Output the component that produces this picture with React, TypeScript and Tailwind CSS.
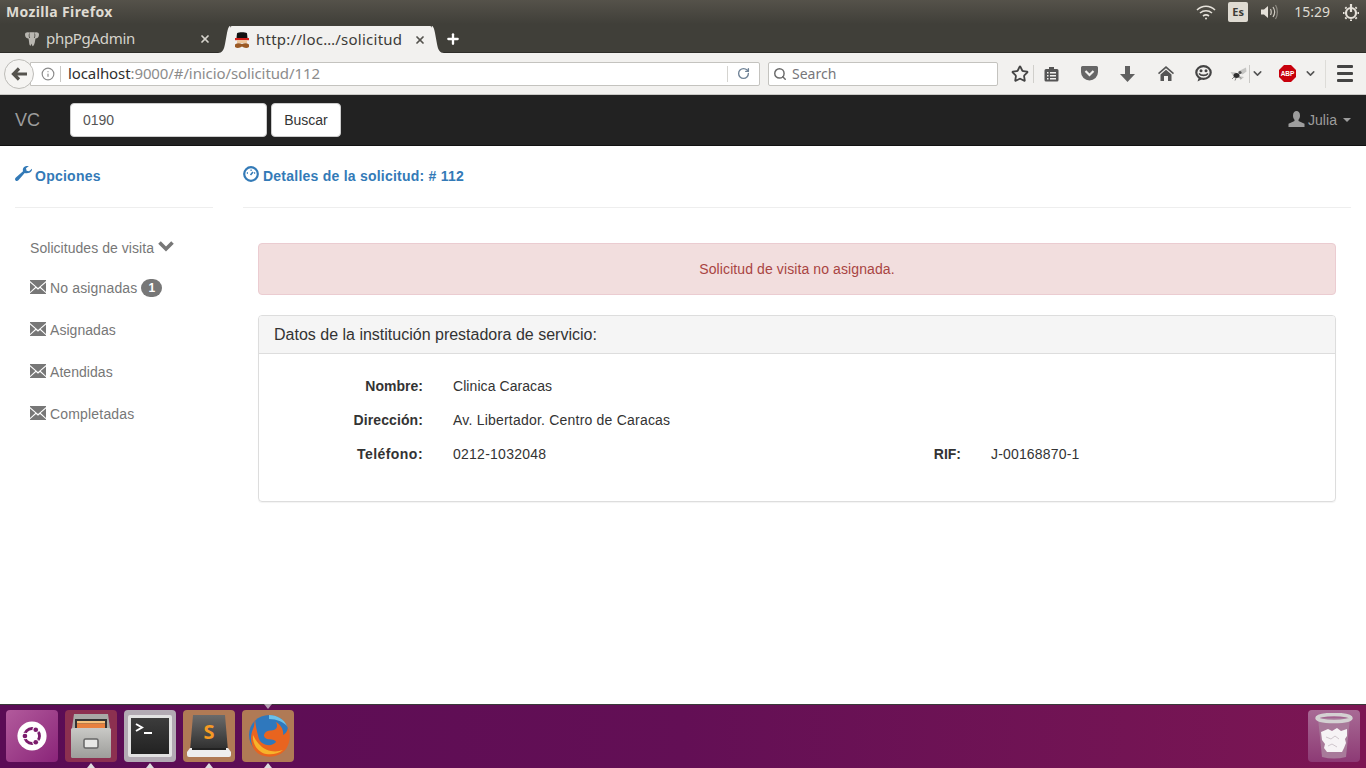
import { Info, RotateCw, Search, Star, ChevronDown, X, Plus } from 'lucide-react'

const page = { fontFamily: '"Liberation Sans", Arial, sans-serif' }
const ui = { fontFamily: '"Noto Sans", "Open Sans", sans-serif' }

function Envelope() {
  return (
    <svg width="16" height="14" viewBox="0 0 16 14" className="shrink-0">
      <path fill="#777" d="M0 0h16v1L8 8 0 1zM0 2.500 5.300 7 0 12zM16 2.500 10.700 7 16 12zM0 14v-.8L6 8l2 1.800L10 8l6 5.200v.8z" />
    </svg>
  )
}

function SideItem({ label, badge, w }: { label: string; badge?: string; w: string }) {
  return (
    <div className="flex h-[42px] items-center gap-1 text-[#777]">
      <span className="-mt-[3px]"><Envelope /></span>
      <span className={w}>{label}</span>
      {badge && (
        <span className="flex h-[18px] w-[21px] items-center justify-center rounded-full bg-[#777] text-xs font-bold text-white">
          {badge}
        </span>
      )}
    </div>
  )
}

function Tile({ bg, children }: { bg: string; children: React.ReactNode }) {
  return <div className={`flex h-[52px] w-[52px] items-center justify-center rounded-[4px] ${bg}`}>{children}</div>
}

function Pip() {
  return <span className="absolute -bottom-[6px] left-1/2 h-0 w-0 -translate-x-1/2 border-x-[4px] border-b-[5px] border-x-transparent border-b-[#ddd]" />
}

export default function App() {
  return (
    <div className="flex h-[768px] w-[1366px] flex-col overflow-hidden bg-white text-sm text-[#333]" style={page}>
      {/* barra ubuntu */}
      <div className="flex h-6 shrink-0 items-center justify-between bg-gradient-to-b from-[#55524a] to-[#403f39] pl-[6px] pr-[7px] text-[#dfdbd2]" style={ui}>
        <span className="text-[14px] font-bold tracking-[0.35px]">Mozilla Firefox</span>
        <div className="flex items-center">
          <svg width="20" height="16" viewBox="0 0 20 16" fill="none" stroke="#e6e2da" strokeWidth="1.600" className="mr-[12px]">
            <path d="M1 6c5-5 13-5 18 0M4 9c3.500-3 8.500-3 12 0M7 12c2-1.500 4-1.500 6 0" />
            <circle cx="10" cy="14.500" r="1" fill="#e6e2da" stroke="none" />
          </svg>
          <span className="mr-[12px] flex h-5 w-5 items-center justify-center rounded-[2px] bg-[#dfdbd2] text-[11px] font-bold text-[#3c3b37]">Es</span>
          <svg width="20" height="16" viewBox="0 0 20 16" fill="none" className="mr-[14px]">
            <path fill="#e6e2da" d="M1 5.500h3L8 2v12l-4-3.500H1z" />
            <path stroke="#cfcbc2" strokeWidth="1.200" d="M10.500 5c1 2 1 4 0 6M13 3c2 3 2 7 0 10" />
            <path stroke="#8d8a82" strokeWidth="1.200" d="M15.500 1c2.500 4 2.500 10 0 14" />
          </svg>
          <span className="mr-[13px] text-[14px]">15:29</span>
          <svg width="16" height="17" viewBox="0 0 16 17" fill="none" stroke="#e6e2da">
            <circle cx="8" cy="9" r="5" strokeWidth="2.200" />
            <path d="M8 0v8" strokeWidth="2.200" />
            <path d="M14.500 9H16M0 9h1.500M12.500 4.500l1.200-1.200M3.500 4.500 2.300 3.300M12.500 13.500l1.200 1.200M3.500 13.500l-1.200 1.200M8 15.500V17" strokeWidth="2" />
          </svg>
        </div>
      </div>

      {/* pestañas */}
      <div className="flex h-[29px] shrink-0 items-end border-b border-[#2e2d29] bg-[#403f39] text-[15px]" style={ui}>
        <div className="flex h-[27px] w-[218px] items-center pl-[24px] pr-[7px] pt-[1px] text-[#d6d3cc]">
          <svg width="16" height="16" viewBox="0 0 16 16" className="mr-[6px] shrink-0">
            <path fill="#b9b7b1" d="M1 3.500C1 1.500 3 1 5 1.500 6 1 10 1 11 1.500 13 1 15 1.500 15 3.500c0 2.500-1.500 4-3.500 4-.5 2.500-.7 6-2.300 7.500-.8.500-1.200-.5-1.200-1.500 0-1-.5-1-.7 0-.2 1-.8 1.500-1.500.8C5 13.500 5.200 10 4.500 7.500 2.500 7.500 1 6 1 3.500z" />
            <path stroke="#403f39" strokeWidth="0.800" fill="none" d="M5.500 2.500c-.5 1.500-.5 3 .2 4.500M10.500 2.500c.5 1.500.5 3-.2 4.500" />
          </svg>
          <span className="flex-1 tracking-[-0.3px]">phpPgAdmin</span>
          <X size={12} strokeWidth={3.500} className="text-[#d6d3cc]" />
        </div>
        <svg width="12" height="27" viewBox="0 0 12 27" className="-mb-px shrink-0">
          <path fill="#f2f1ef" d="M0 27c4 0 6-3 7-9L9 7c1-5 2-7 3-7v27z" />
        </svg>
        <div className="-mb-px flex h-[27px] w-[202px] items-center rounded-t-[2px] bg-[#f2f1ef] pl-[4px] pr-[6px] pt-[1px] text-[#3c3b37]">
          <svg width="16" height="17" viewBox="0 0 16 17" className="mr-[6px] shrink-0">
            <path fill="#111" d="M2.500 6 3 1.200C5 0 11 0 13 1.200L13.500 6z" />
            <rect x="1" y="6" width="14" height="2.200" fill="#d3201a" />
            <rect x="3" y="8.200" width="10" height="2.800" fill="#efc79c" />
            <path fill="#9c5a24" d="M1 12.500c2-1.500 5-1.500 7-.5 2-1 5-1 7 .5V15c-2 1.500-5 1-7-.5-2 1.500-5 2-7 .5z" />
          </svg>
          <span className="flex-1 whitespace-nowrap tracking-[0.25px]">http://loc…/solicitud</span>
          <X size={12} strokeWidth={3.500} className="text-[#55534e]" />
        </div>
        <svg width="12" height="27" viewBox="0 0 12 27" className="-mb-px shrink-0">
          <path fill="#f2f1ef" d="M12 27c-4 0-6-3-7-9L3 7C2 2 1 0 0 0v27z" />
        </svg>
        <div className="flex h-[27px] w-[18px] items-center justify-center">
          <Plus size={16} strokeWidth={3.500} className="text-white" />
        </div>
      </div>

      {/* barra de navegacion */}
      <div className="flex h-[42px] shrink-0 items-center border-b border-[#c9c8c5] bg-[#f2f1ef] pl-[4px] pr-[13px]" style={ui}>
        <div className="z-10 flex h-[30px] w-[30px] shrink-0 items-center justify-center rounded-full border border-[#bdbcb8] bg-[#f5f4f2]">
          <svg width="16" height="14" viewBox="0 0 16 14" fill="none" stroke="#55534e" strokeWidth="3.200">
            <path d="M8 1.500 2.500 7 8 12.500M3 7h13" />
          </svg>
        </div>
        <div className="-ml-[4px] flex h-[24px] w-[730px] shrink-0 items-center rounded-r-[2px] border border-[#c4c3bf] bg-white pl-[10px] pr-[9px] text-[15px]">
          <Info size={14} className="mr-[5px] text-[#8a8a8a]" />
          <span className="mr-[7px] h-[16px] border-l border-[#c9c8c5]" />
          <span className="tracking-[-0.1px] text-[#2f2f2f]">localhost</span>
          <span className="tracking-[-0.1px] text-[#8c8c8c]">:9000/#/inicio/solicitud/112</span>
          <span className="ml-auto mr-[2px] h-[16px] border-l border-[#d5d4d0]" />
          <RotateCw size={13} strokeWidth={2.500} className="ml-[7px] text-[#6f8296]" />
        </div>
        <div className="ml-[8px] flex h-[24px] w-[230px] shrink-0 items-center rounded-[2px] border border-[#c4c3bf] bg-white pl-[2px] text-[14px] text-[#77767a]">
          <Search size={14} strokeWidth={2.500} className="mr-[5px] ml-[2px] text-[#6a6a6a]" />
          Search
        </div>
        <Star size={18} strokeWidth={2.400} className="ml-[13px] shrink-0 text-[#444]" />
        <span className="ml-[4px] h-[18px] border-l border-[#d0cfcb]" />
        <svg width="15" height="16" viewBox="0 0 15 16" className="ml-[10px] shrink-0">
          <path fill="#555" fillRule="evenodd" d="M2 3h3V1h5v2h3q1.500 0 1.500 1.500V14q0 1.500-1.500 1.500H2Q.5 15.500.5 14V4.500Q.5 3 2 3zM3 6v1.500h1.500V6zm3 0v1.500h6V6zM3 9v1.500h1.500V9zm3 0v1.500h6V9zm-3 3v1.500h1.500V12zm3 0v1.500h6V12z" />
        </svg>
        <svg width="17" height="15" viewBox="0 0 17 15" className="ml-[22px] shrink-0">
          <path fill="#666" d="M1.500 0h14A1.500 1.500 0 0 1 17 1.500V6a8.500 8.500 0 0 1-17 0V1.500A1.500 1.500 0 0 1 1.500 0z" />
          <path fill="none" stroke="#f2f1ef" strokeWidth="2.200" d="m4.500 5 4 4 4-4" />
        </svg>
        <svg width="15" height="16" viewBox="0 0 15 16" className="ml-[22px] shrink-0">
          <path fill="#606060" d="M5 0h5v8h5l-7.500 8L0 8h5z" />
        </svg>
        <svg width="16" height="15" viewBox="0 0 16 15" className="ml-[23px] shrink-0">
          <path fill="#555" d="M8 0 16 7l-1 1.200L8 2.200 1 8.200 0 7z" />
          <path fill="#555" d="M8 3.800 13.500 8.500V15H10V10H6v5H2.500V8.500z" />
        </svg>
        <svg width="17" height="17" viewBox="0 0 17 17" className="ml-[21px] shrink-0">
          <ellipse cx="8.500" cy="7.500" rx="7.200" ry="6.300" fill="#f2f1ef" stroke="#444" strokeWidth="2.200" />
          <circle cx="6" cy="5.800" r="1.500" fill="#444" />
          <circle cx="11" cy="5.800" r="1.500" fill="#444" />
          <path d="M4 8.500c2 2.500 7 2.500 9 0" fill="none" stroke="#444" strokeWidth="1.600" />
          <path d="M2.500 16.500 4 12l3.500 2z" fill="#444" />
        </svg>
        <svg width="17" height="14" viewBox="0 0 17 14" className="ml-[18px] shrink-0">
          <path fill="#c4c4c2" d="M8 4.500 16 .5l.5 4-4 3zM.5 5l6 .5-3 4zM8 9l6 1-3.500 3z" />
          <ellipse cx="6.500" cy="8.500" rx="3" ry="2.500" fill="#2e2e2e" />
          <circle cx="10" cy="5.500" r="1.600" fill="#555" />
          <path stroke="#555" strokeWidth="0.700" d="M4 10 2 12M6 11l-1 2.500M9 9.500l2 2" />
        </svg>
        <span className="ml-[2px] h-[18px] border-l border-[#c9c8c5]" />
        <ChevronDown size={13} strokeWidth={2.800} className="ml-[1px] shrink-0 text-[#555]" />
        <svg width="17" height="17" viewBox="0 0 17 17" className="ml-[15px] shrink-0">
          <path fill="#c8000c" d="M5 0h7l5 5v7l-5 5H5l-5-5V5z" />
          <text x="8.500" y="11" textAnchor="middle" fontSize="6.500" fontWeight="700" fill="#fff" style={page}>ABP</text>
        </svg>
        <ChevronDown size={13} strokeWidth={2.800} className="ml-[8px] shrink-0 text-[#555]" />
        <span className="ml-[8px] h-[28px] border-l border-[#dddcd8]" />
        <div className="ml-auto flex w-[16px] shrink-0 flex-col gap-[4px]">
          <span className="h-[3px] rounded-[1px] bg-[#444]" />
          <span className="h-[3px] rounded-[1px] bg-[#444]" />
          <span className="h-[3px] rounded-[1px] bg-[#444]" />
        </div>
      </div>

      {/* navbar de la app */}
      <div className="flex h-[51px] shrink-0 items-center border-b border-[#111] bg-[#222] pl-[15px] pr-[15px]">
        <span className="w-[55px] text-lg text-[#9d9d9d]">VC</span>
        <div className="flex h-[34px] w-[197px] items-center rounded-[4px] border border-[#ccc] bg-white pl-[12px] text-[#555]">0190</div>
        <button className="ml-1 h-[34px] w-[70px] rounded-[4px] border border-[#ccc] bg-white text-[#333]">Buscar</button>
        <div className="ml-auto flex items-center text-[#9d9d9d]">
          <svg width="17" height="16" viewBox="0 0 17 16" className="mr-[3px] -mt-[2px]">
            <path fill="#9d9d9d" d="M5 4.500C5 1.500 6.500 0 8.500 0S12 1.500 12 4.500c0 2-.7 3.500-1.500 4.300V10l6 2.800V16H.5v-3.200l6-2.800V8.800C5.700 8 5 6.500 5 4.500z" />
          </svg>
          <span className="tracking-[0.05px]">Julia</span>
          <span className="ml-[6px] h-0 w-0 border-x-[4px] border-t-[4px] border-x-transparent border-t-[#9d9d9d]" />
        </div>
      </div>

      {/* contenido */}
      <div className="flex min-h-0 flex-1 pl-[15px] pr-[15px]">
        <aside className="w-[198px] shrink-0">
          <div className="flex h-[62px] items-center gap-[3px] border-b border-[#eee] pb-[2px] font-bold tracking-[0.25px] text-[#337ab7]">
            <svg width="17" height="15" viewBox="0 0 17 15" className="-mt-1">
              <path fill="#337ab7" d="M17 2.800 14 5.300l-2.400-.6L11 2.300 13.900 0C11 -.6 7.800.9 7.800 3.800c0 .6.100 1 .2 1.500L.9 11.500c-1.100 1-1.100 2.100-.3 2.900.8.800 1.900.800 2.800-.2L9.700 7c3.400.8 7.900-.9 7.300-4.200z" />
            </svg>
            Opciones
          </div>
          <div className="pl-[15px] pt-[20px]">
            <div className="flex h-[40px] items-center gap-1 text-[#777]">
              <span className="tracking-[0.05px]">Solicitudes de visita</span>
              <svg width="16" height="12" viewBox="0 0 16 12" className="-mt-1">
                <path fill="none" stroke="#777" strokeWidth="3.600" d="m1.500 2.500 6.500 6.500 6.500-6.500" />
              </svg>
            </div>
            <div className="-mt-px">
              <SideItem label="No asignadas" badge="1" w="tracking-[0.15px]" />
              <SideItem label="Asignadas" w="tracking-[0.05px]" />
              <SideItem label="Atendidas" w="tracking-[0.05px]" />
              <SideItem label="Completadas" w="tracking-[0.18px]" />
            </div>
          </div>
        </aside>

        <main className="ml-[30px] min-w-0 flex-1">
          <div className="flex h-[62px] items-center gap-[4px] border-b border-[#eee] pb-[2px] font-bold tracking-[0.235px] text-[#337ab7]">
            <svg width="16" height="16" viewBox="0 0 16 16" fill="none" className="-mt-1">
              <circle cx="8" cy="8" r="6.800" stroke="#337ab7" strokeWidth="2.200" />
              <path stroke="#337ab7" strokeWidth="1.600" d="M3.800 7h1.200M7.500 4.300h1.200M11 7h1.200M7.500 9 10 6" />
            </svg>
            Detalles de la solicitud: # 112
          </div>
          <div className="pl-[15px] pr-[15px] pt-[35px]">
            <div className="flex h-[52px] items-center justify-center rounded-[4px] border border-[#ebccd1] bg-[#f2dede] tracking-[0.1px] text-[#a94442]">
              Solicitud de visita no asignada.
            </div>
            <div className="mt-[20px] rounded-[4px] border border-[#ddd] shadow-[0_1px_1px_rgba(0,0,0,0.05)]">
              <div className="flex h-[38px] items-center rounded-t-[3px] border-b border-[#ddd] bg-[#f5f5f5] pl-[15px] text-base text-[#333]">
                Datos de la institución prestadora de servicio:
              </div>
              <div className="h-[147px] pt-[15px]">
                <div className="flex h-[34px] items-center">
                  <span className="w-[164px] text-right font-bold tracking-[0.02px]">Nombre:</span>
                  <span className="ml-[30px] tracking-[0.07px]">Clinica Caracas</span>
                </div>
                <div className="flex h-[34px] items-center">
                  <span className="w-[164px] text-right font-bold tracking-[0.1px]">Dirección:</span>
                  <span className="ml-[30px] tracking-[0.21px]">Av. Libertador. Centro de Caracas</span>
                </div>
                <div className="flex h-[34px] items-center">
                  <span className="w-[164px] text-right font-bold tracking-[0.45px]">Teléfono:</span>
                  <span className="ml-[30px] w-[380px] tracking-[0.25px]">0212-1032048</span>
                  <span className="w-[128px] text-right font-bold">RIF:</span>
                  <span className="ml-[30px] tracking-[0.17px]">J-00168870-1</span>
                </div>
              </div>
            </div>
          </div>
        </main>
      </div>

      {/* launcher */}
      <div className="relative flex h-[64px] shrink-0 items-center justify-between bg-gradient-to-r from-[#5a0c55] via-[#630f55] to-[#7c1653] pl-[6px] pr-[6px] shadow-[inset_0_1px_0_#3a3a3a]">
        <div className="flex items-center gap-[7px]">
          <Tile bg="bg-gradient-to-br from-[#b25a9c] to-[#8a2379]">
            <svg width="30" height="30" viewBox="0 0 36 36">
              <circle cx="18" cy="18" r="17.500" fill="#fff" />
              <circle cx="18" cy="18" r="9" fill="none" stroke="#7b1c6c" strokeWidth="3.400" />
              <circle cx="9.500" cy="18" r="4" fill="#fff" />
              <circle cx="9.500" cy="18" r="2.800" fill="#7b1c6c" />
              <circle cx="22.500" cy="10.500" r="4" fill="#fff" />
              <circle cx="22.500" cy="10.500" r="2.800" fill="#7b1c6c" />
              <circle cx="22.500" cy="25.500" r="4" fill="#fff" />
              <circle cx="22.500" cy="25.500" r="2.800" fill="#7b1c6c" />
            </svg>
          </Tile>
          <div className="relative">
            <Tile bg="bg-[#8c3050]">
              <svg width="42" height="44" viewBox="0 0 42 44">
                <defs>
                  <linearGradient id="drawer" x1="0" y1="0" x2="0" y2="1">
                    <stop offset="0" stopColor="#c9c9c6" />
                    <stop offset="1" stopColor="#9d9d9a" />
                  </linearGradient>
                </defs>
                <path d="M4 0h34l2 14H2z" fill="#a9a9a6" />
                <rect x="5" y="5" width="32" height="10" fill="#333" />
                <rect x="7" y="7" width="28" height="2.500" fill="#f6c07a" />
                <rect x="7" y="9.500" width="28" height="5" fill="#e8803e" />
                <rect x="1" y="14" width="40" height="30" rx="1.500" fill="url(#drawer)" />
                <rect x="14" y="25" width="14" height="9" rx="1.500" fill="#e8e8e6" stroke="#666" strokeWidth="1.500" />
              </svg>
            </Tile>
            <Pip />
          </div>
          <div className="relative">
            <Tile bg="bg-[#b2aab3]">
              <svg width="44" height="42" viewBox="0 0 44 42">
                <defs>
                  <linearGradient id="term" x1="0" y1="0" x2="0" y2="1">
                    <stop offset="0" stopColor="#3c3c3c" />
                    <stop offset="1" stopColor="#222" />
                  </linearGradient>
                </defs>
                <rect x="0" y="0" width="44" height="42" rx="2" fill="#e2e2e2" />
                <rect x="3" y="3" width="38" height="36" fill="url(#term)" />
                <path d="m8 9 6 3.500-6 3.500" fill="none" stroke="#fff" strokeWidth="2" />
                <path d="M16 18h8" stroke="#fff" strokeWidth="2" />
              </svg>
            </Tile>
            <Pip />
          </div>
          <div className="relative">
            <Tile bg="bg-[#b07a55]">
              <svg width="46" height="42" viewBox="0 0 46 42">
                <defs>
                  <linearGradient id="key" x1="0" y1="0" x2="0" y2="1">
                    <stop offset="0" stopColor="#6a6a6a" />
                    <stop offset="1" stopColor="#2c2c2c" />
                  </linearGradient>
                </defs>
                <path d="M4 36 7 0h32l3 36z" fill="url(#key)" />
                <path d="M1 37 4 33h38l3 4v3q0 2-2 2H3q-2 0-2-2z" fill="#eee" />
                <path d="M6 33h34v2H6z" fill="#222" />
                <text x="23" y="24" textAnchor="middle" fontSize="20" fontWeight="700" fill="#f59a23" style={ui}>S</text>
              </svg>
            </Tile>
            <Pip />
          </div>
          <div className="relative">
            <Tile bg="bg-[#b07a55]">
              <svg width="46" height="46" viewBox="0 0 46 46">
                <circle cx="24" cy="22" r="20" fill="#2f78bd" />
                <path d="M24 2c8 0 15 4 18 11-4-4-10-7-18-7z" fill="#6cc0e8" />
                <path d="M10 6c-1 4 0 6-2 10-4 9-2 20 6 25 9 5 21 3 27-5 4-6 5-14 2-21-1 4-3 6-5 7 1-5-2-10-7-13 2 4 1 7-2 8-4 1-7 0-9 3-2 2-1 5 2 6 4 1 8 0 9 3-4 5-14 4-17-3-1-4-3-10-4-20z" fill="#e9641f" />
                <path d="M8 22c-1 8 4 17 13 19 6 1 12 0 17-4-8 3-18 1-23-5-3-3-5-6-7-10z" fill="#f7b32b" />
              </svg>
            </Tile>
            <Pip />
            <span className="absolute -top-[6px] left-1/2 h-0 w-0 -translate-x-1/2 border-x-[4px] border-t-[5px] border-x-transparent border-t-[#ddd]/70" />
          </div>
        </div>
        <Tile bg="bg-gradient-to-b from-[#a86a95] to-[#8d3a75]">
          <svg width="38" height="46" viewBox="0 0 38 46">
            <path d="M3 5h32l-4 39q-12 3-24 0z" fill="#a87a9a" />
            <path d="M6 19l7-3 4 2 5-3 4 3 6-2 0 7-2 3 1 4-2 5-2 4H12l-3-4 1-4-3-4z" fill="#f6f3f5" />
            <path d="M11 24l5 2 4-3 4 3M13 33l4-2 5 3" fill="none" stroke="#cfc6cc" strokeWidth="1" />
            <ellipse cx="19" cy="5" rx="17" ry="3.500" fill="none" stroke="#d4d1d2" strokeWidth="3.500" />
          </svg>
        </Tile>
      </div>
    </div>
  )
}
